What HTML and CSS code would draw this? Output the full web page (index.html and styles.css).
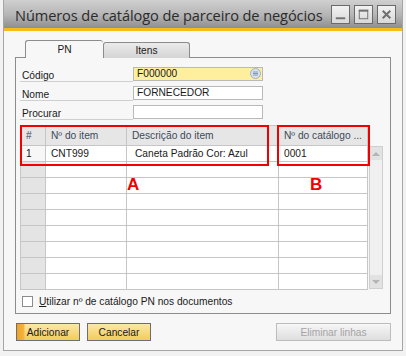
FILE: index.html
```html
<!DOCTYPE html>
<html>
<head>
<meta charset="utf-8">
<link rel="stylesheet" href="styles.css">
</head>
<body>
<div class="window">
  <div class="titlebar">
    <span class="title">Números de catálogo de parceiro de negócios</span>
    <div class="wbtns">
      <span class="wbtn"><svg width="18" height="18" viewBox="0 0 18 18"><rect x="4" y="12" width="10" height="2" fill="#707070"/></svg></span>
      <span class="wbtn"><svg width="18" height="18" viewBox="0 0 18 18"><rect x="4.5" y="4.5" width="9" height="9" fill="none" stroke="#707070" stroke-width="1"/><rect x="4" y="4" width="10" height="2" fill="#707070"/></svg></span>
      <span class="wbtn"><svg width="18" height="18" viewBox="0 0 18 18"><path d="M5 5 L13 13 M13 5 L5 13" stroke="#707070" stroke-width="2.2"/></svg></span>
    </div>
  </div>
  <div class="orange"></div>
  <div class="content">
    <div class="tabs">
      <div class="tab active">PN</div>
      <div class="tab">Itens</div>
    </div>
    <div class="panel">
      <div class="form">
        <div class="frow"><span class="lbl">Código</span><span class="inp yellow">F000000<span class="lookup"><svg width="11" height="11" viewBox="0 0 11 11"><circle cx="5.5" cy="5.5" r="5" fill="#d8e2ee" stroke="#9fb2c8"/><path d="M3 4h5M3 5.5h5M3 7h5" stroke="#7f93ad" stroke-width="0.9"/></svg></span></span></div>
        <div class="frow"><span class="lbl">Nome</span><span class="inp">FORNECEDOR</span></div>
        <div class="frow"><span class="lbl">Procurar</span><span class="inp"></span></div>
      </div>
      <div class="gridwrap">
        <table class="grid">
          <thead>
            <tr><th class="c0">#</th><th class="c1">Nº do item</th><th class="c2">Descrição do item</th><th class="c3">Nº do catálogo ...</th></tr>
          </thead>
          <tbody>
            <tr class="first"><td class="c0 num">1</td><td>CNT999</td><td class="desc">Caneta Padrão Cor: Azul</td><td>0001</td></tr>
            <tr><td class="c0 rh"></td><td></td><td></td><td></td></tr>
            <tr><td class="c0 rh"></td><td></td><td></td><td></td></tr>
            <tr><td class="c0 rh"></td><td></td><td></td><td></td></tr>
            <tr><td class="c0 rh"></td><td></td><td></td><td></td></tr>
            <tr><td class="c0 rh"></td><td></td><td></td><td></td></tr>
            <tr><td class="c0 rh"></td><td></td><td></td><td></td></tr>
            <tr><td class="c0 rh"></td><td></td><td></td><td></td></tr>
            <tr><td class="c0 rh"></td><td></td><td></td><td></td></tr>
          </tbody>
        </table>
        <div class="scroll">
          <div class="sbtn"><svg width="10" height="6" viewBox="0 0 10 6"><path d="M1 5 L5 1 L9 5 Z" fill="#b4b4b4"/></svg></div>
          <div class="strack"></div>
          <div class="sbtn"><svg width="10" height="6" viewBox="0 0 10 6"><path d="M1 1 L5 5 L9 1 Z" fill="#b4b4b4"/></svg></div>
        </div>
        <div class="mark mark-a"></div>
        <div class="mark mark-b"></div>
        <span class="letter letter-a">A</span>
        <span class="letter letter-b">B</span>
      </div>
      <label class="check"><span class="box"></span><span><u>U</u>tilizar nº de catálogo PN nos documentos</span></label>
    </div>
    <div class="buttons">
      <button class="btn primary">Adicionar</button>
      <button class="btn">Cancelar</button>
      <span class="spacer"></span>
      <button class="btn disabled">Eliminar linhas</button>
    </div>
  </div>
</div>
</body>
</html>
```
FILE: styles.css
```css
html, body {
  margin: 0;
  padding: 0;
}
body {
  width: 406px;
  height: 356px;
  background: #f2f2f2;
  font-family: "Liberation Sans", Arial, sans-serif;
  font-size: 10.2px;
  color: #1a1a1a;
  overflow: hidden;
}
.window {
  box-sizing: border-box;
  margin: 0 3px 0 3px;
  width: 400px;
  height: 351px;
  border-left: 1px solid #a6a6a6;
  border-right: 1px solid #a6a6a6;
  border-bottom: 1px solid #a6a6a6;
  background: #f7f7f7;
  display: flex;
  flex-direction: column;
}
.titlebar {
  height: 28px;
  background: linear-gradient(#d0d0d0, #b4b4b4 55%, #8e8e8e);
  display: flex;
  align-items: center;
  padding-left: 11px;
  padding-right: 6px;
}
.title {
  font-family: "Open Sans", "Noto Sans", sans-serif;
  font-size: 14.6px;
  color: #2b2b2b;
  letter-spacing: -0.1px;
  flex: 1;
  white-space: nowrap;
  overflow: hidden;
  margin-top: 1px;
}
.wbtns {
  display: flex;
  gap: 4px;
}
.wbtn {
  width: 17px;
  height: 17px;
  border: 1px solid #6a6a6a;
  background: linear-gradient(#f2f2f2, #d8d8d8);
  display: flex;
  align-items: center;
  justify-content: center;
}
.wbtn svg { width: 17px; height: 17px; }
.orange {
  height: 3px;
  background: #f6bb1a;
}
.content {
  flex: 1;
  padding: 9px 11px 0 11px;
  display: flex;
  flex-direction: column;
}
.tabs {
  display: flex;
  align-items: flex-end;
  height: 18px;
  padding-left: 10px;
  margin-bottom: -1px;
  position: relative;
  z-index: 1;
}
.tab {
  box-sizing: border-box;
  height: 16px;
  width: 87px;
  border: 1px solid #8c8c8c;
  border-bottom: none;
  border-radius: 3px 3px 0 0;
  background: linear-gradient(#ebebeb, #d4d4d4);
  text-align: center;
  line-height: 15px;
  color: #1a1a1a;
}
.tab.active {
  width: 78px;
  height: 18px;
  background: #f7f7f7;
  line-height: 18px;
  border-right: none;
}
.panel {
  box-sizing: border-box;
  height: 257px;
  border: 1px solid #8c8c8c;
  padding: 9px 7px 0 4px;
  display: flex;
  flex-direction: column;
}
.form {
  display: flex;
  flex-direction: column;
  gap: 5px;
}
.frow {
  display: flex;
  height: 14px;
}
.lbl {
  width: 111px;
  padding-left: 2px;
  border-bottom: 1px solid #cfcfcf;
  line-height: 17px;
  height: 14px;
  color: #1a1a1a;
}
.inp {
  box-sizing: border-box;
  position: relative;
  width: 130px;
  height: 14px;
  border: 1px solid #b9b9b9;
  background: #ffffff;
  padding-left: 3px;
  line-height: 12px;
}
.inp.yellow {
  background: #fdef9d;
}
.lookup {
  position: absolute;
  right: 1px;
  top: 0px;
  width: 11px;
  height: 11px;
}
.lookup svg { display: block; }
.gridwrap {
  position: relative;
  margin-top: 6px;
  display: flex;
  align-items: flex-start;
  gap: 1px;
}
.grid {
  border-collapse: collapse;
  table-layout: fixed;
  width: 346px;
}
.grid th, .grid td {
  border: 1px solid #c6c6c6;
  padding: 0 0 0 5px;
  text-align: left;
  white-space: nowrap;
  overflow: hidden;
}
.grid th {
  height: 19px;
  background: #e6e6e6;
  font-weight: normal;
  color: #3c4a5a;
}
.grid td {
  height: 15px;
  background: #ffffff;
}
.grid .c0 { width: 19px; }
.grid .c1 { width: 75px; }
.grid .c2 { width: 146px; }
.grid .c3 { width: 83px; }
.grid th.c2 { text-indent: 0px; }
.grid td.desc { text-indent: 3px; }
.grid td.num { background: #f7f7f7; }
.grid td.rh { background: #e4e4e4; }
.scroll {
  box-sizing: border-box;
  margin-top: 21px;
  width: 16px;
  height: 143px;
  border: 1px solid #cfcfcf;
  background: #f0f0f0;
  display: flex;
  flex-direction: column;
}
.sbtn {
  height: 13px;
  background: #e2e2e2;
  display: flex;
  align-items: center;
  justify-content: center;
}
.strack { flex: 1; }
.mark {
  position: absolute;
  top: 0;
  height: 37px;
  border: 2px solid #f20000;
}
.mark-a { left: 0; width: 245px; }
.mark-b { left: 257px; width: 89px; }
.letter {
  position: absolute;
  top: 50px;
  font-family: "Liberation Sans", Arial, sans-serif;
  font-weight: bold;
  font-size: 17px;
  color: #f20000;
}
.letter-a { left: 107px; }
.letter-b { left: 290px; }
.check {
  display: flex;
  align-items: center;
  gap: 6px;
  margin-top: 6px;
  padding-left: 2px;
}
.box {
  box-sizing: border-box;
  width: 11px;
  height: 11px;
  border: 1px solid #8c8c8c;
  background: #ffffff;
}
.buttons {
  display: flex;
  gap: 7px;
  margin-top: 9px;
  padding-left: 1px;
  padding-right: 0;
}
.spacer { flex: 1; }
.btn {
  box-sizing: border-box;
  height: 18px;
  width: 64px;
  border: 1px solid #6e6e6e;
  background: linear-gradient(#fbe7a8, #f2cd5a);
  font-family: "Liberation Sans", Arial, sans-serif;
  font-size: 10.2px;
  color: #1a1a1a;
  padding: 0;
  margin: 0;
}
.btn.primary {
  background: linear-gradient(90deg, #f0a126 0, #f3b63e 7px, transparent 8px), linear-gradient(#fbe7a8, #f2cd5a);
}
.btn.disabled {
  width: 115px;
  border-color: #bdbdbd;
  background: linear-gradient(#f6f6f6, #dedede);
  color: #a4a4a4;
}
```
